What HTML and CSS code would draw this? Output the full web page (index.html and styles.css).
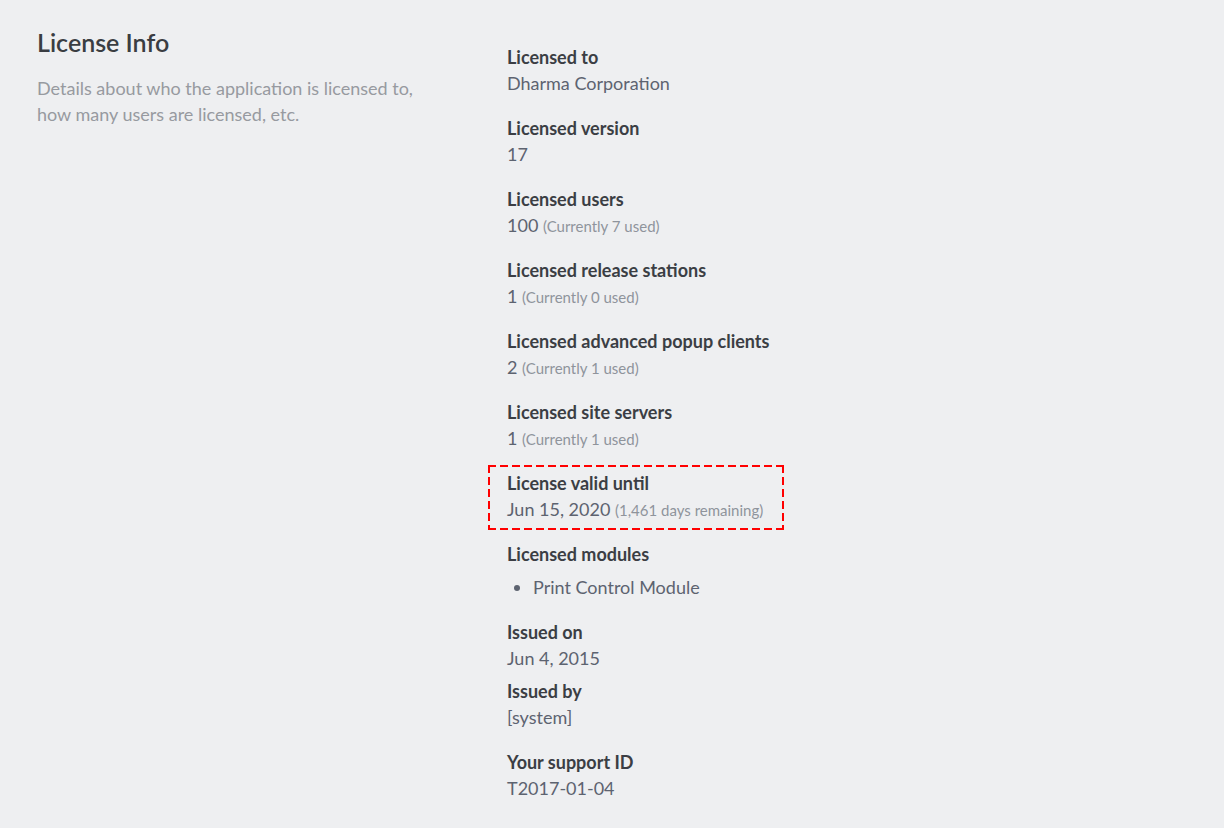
FILE: index.html
```html
<!DOCTYPE html>
<html>
<head>
<meta charset="utf-8">
<link rel="stylesheet" href="styles.css">
</head>
<body>
<div class="page">
  <div class="intro">
    <h2 class="title">License Info</h2>
    <p class="desc">Details about who the application is licensed to, how many users are licensed, etc.</p>
  </div>
  <div class="details">
    <div class="group">
      <div class="label">Licensed to</div>
      <div class="value">Dharma Corporation</div>
    </div>
    <div class="group">
      <div class="label">Licensed version</div>
      <div class="value">17</div>
    </div>
    <div class="group">
      <div class="label">Licensed users</div>
      <div class="value">100 <span class="note">(Currently 7 used)</span></div>
    </div>
    <div class="group">
      <div class="label">Licensed release stations</div>
      <div class="value">1 <span class="note">(Currently 0 used)</span></div>
    </div>
    <div class="group">
      <div class="label">Licensed advanced popup clients</div>
      <div class="value">2 <span class="note">(Currently 1 used)</span></div>
    </div>
    <div class="group">
      <div class="label">Licensed site servers</div>
      <div class="value">1 <span class="note">(Currently 1 used)</span></div>
    </div>
    <div class="group highlight">
      <div class="label">License valid until</div>
      <div class="value">Jun 15, 2020 <span class="note">(1,461 days remaining)</span></div>
    </div>
    <div class="group">
      <div class="label">Licensed modules</div>
      <ul class="modules">
        <li>Print Control Module</li>
      </ul>
    </div>
    <div class="group tight">
      <div class="label">Issued on</div>
      <div class="value">Jun 4, 2015</div>
    </div>
    <div class="group">
      <div class="label">Issued by</div>
      <div class="value">[system]</div>
    </div>
    <div class="group">
      <div class="label">Your support ID</div>
      <div class="value">T2017-01-04</div>
    </div>
  </div>
</div>
</body>
</html>
```
FILE: styles.css
```css
html, body {
  margin: 0;
  padding: 0;
  background: #eeeff1;
}
body {
  font-family: Lato, "Open Sans", sans-serif;
  color: #555b66;
}
.page {
  display: grid;
  grid-template-columns: 470px 1fr;
  padding: 27px 0 0 37px;
}
.title {
  margin: 0;
  font-size: 25px;
  line-height: 30px;
  font-weight: 600;
  color: #3a3d42;
}
.desc {
  margin: 18px 0 0;
  width: 400px;
  font-size: 18px;
  line-height: 26px;
  color: #979aa0;
}
.details {
  padding-top: 17px;
  display: flex;
  flex-direction: column;
  gap: 19px;
}
.group.tight {
  margin-bottom: -12px;
}
.label {
  font-size: 18px;
  line-height: 26px;
  font-weight: 700;
  color: #3b3e44;
}
.value {
  font-size: 18px;
  line-height: 26px;
  color: #5d6370;
}
.note {
  font-size: 15px;
  line-height: 1;
  color: #8f949c;
}
.highlight {
  position: relative;
}
.highlight::after {
  content: "";
  position: absolute;
  left: -19px;
  top: -5px;
  width: 296px;
  height: 65px;
  background:
    repeating-linear-gradient(90deg, #f00 0 8px, transparent 8px 12px) left top / 100% 2px no-repeat,
    repeating-linear-gradient(90deg, #f00 0 8px, transparent 8px 12px) left bottom / 100% 2px no-repeat,
    repeating-linear-gradient(180deg, #f00 0 8px, transparent 8px 12px) left top / 2px 100% no-repeat,
    repeating-linear-gradient(180deg, #f00 0 8px, transparent 8px 12px) right top / 2px 100% no-repeat;
}
.modules {
  margin: 7px 0 0;
  padding: 0 0 0 26px;
  font-size: 18px;
  line-height: 26px;
  color: #5d6370;
}
.modules li::marker {
  color: #5d6370;
}
```
